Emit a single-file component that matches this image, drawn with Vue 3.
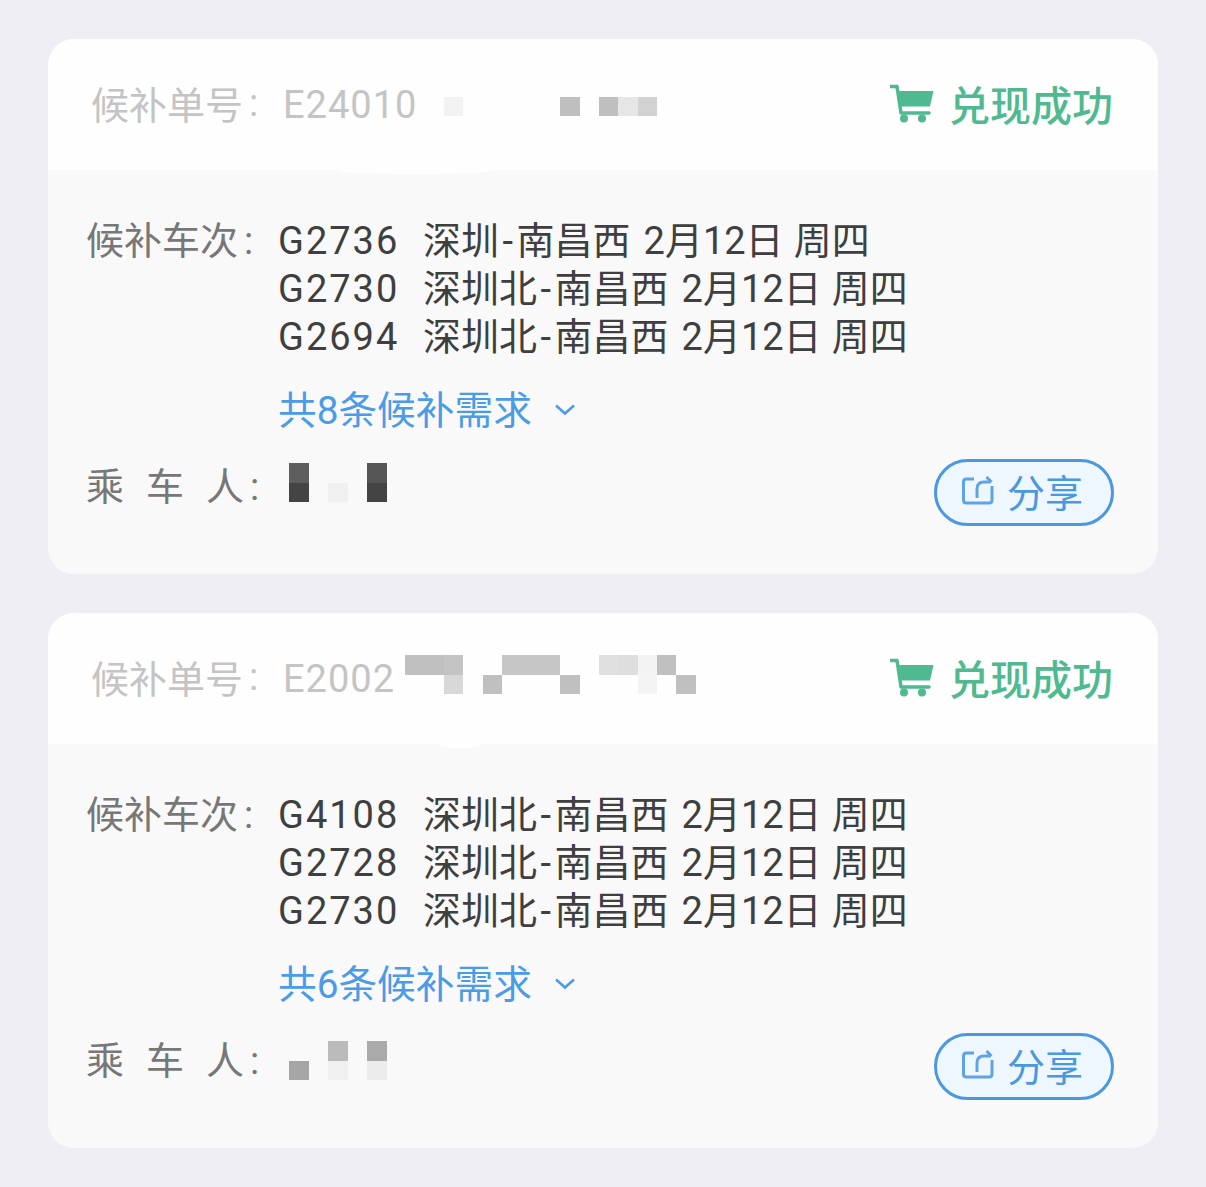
<script setup>
const orders = [
  {
    id: 'E24010',
    count: 8,
    shift: 0,
    smudge: { left: 290, width: 152 },
    trains: [
      { code: 'G2736', from: '深圳', to: '南昌西' },
      { code: 'G2730', from: '深圳北', to: '南昌西' },
      { code: 'G2694', from: '深圳北', to: '南昌西' }
    ],
    idCells: [
      [null, null, null, null, null, null, null, null, null, null, null, null, null, null, null],
      [null, null, '#f3f3f3', null, null, null, null, null, '#bfbfbf', null, '#bfbfbf', '#e6e6e6', '#d2d2d2', null, null]
    ],
    nameCells: [
      ['#5e5e5e', null, null, null, '#555555'],
      ['#444444', null, '#f0f0f0', null, '#444444']
    ]
  },
  {
    id: 'E2002',
    count: 6,
    shift: 4,
    smudge: { left: 392, width: 40 },
    trains: [
      { code: 'G4108', from: '深圳北', to: '南昌西' },
      { code: 'G2728', from: '深圳北', to: '南昌西' },
      { code: 'G2730', from: '深圳北', to: '南昌西' }
    ],
    idCells: [
      ['#c0c0c0', '#c0c0c0', '#c4c4c4', null, null, '#c6c6c6', '#c6c6c6', '#c6c6c6', null, null, '#e0e0e0', '#dedede', '#f3f3f3', '#c0c0c0', null],
      [null, null, '#d8d8d8', null, '#c0c0c0', null, null, null, '#c0c0c0', null, null, null, '#f4f4f4', null, '#c0c0c0']
    ],
    nameCells: [
      [null, null, '#bbbbbb', null, '#aaaaaa'],
      ['#a6a6a6', null, '#f0f0f0', null, '#ececec']
    ]
  }
]
</script>

<template>
  <div class="page">
    <div v-for="order in orders" :key="order.id" class="card">
      <div class="head">
        <div class="order">
          <span class="order-label">候补单号</span>
          <span class="colon">:</span>
          <span class="order-id">{{ order.id }}</span>
        </div>
        <div class="id-mosaic" :style="{ marginTop: order.shift + 'px' }">
          <template v-for="(row, r) in order.idCells">
            <i v-for="(c, i) in row" :key="r + '-' + i" :style="{ background: c || 'transparent' }"></i>
          </template>
        </div>
        <div class="status">
          <svg class="cart" width="44" height="40" viewBox="0 0 44 40">
            <path d="M1 2.500H7L11 29H39" fill="none" stroke="#4fb98f" stroke-width="3.500" stroke-linejoin="round" stroke-linecap="round" />
            <path d="M9 7H43.500L40 22.500H11Z" fill="#4fb98f" />
            <circle cx="14" cy="34.500" r="4" fill="#4fb98f" />
            <circle cx="32" cy="34.500" r="4" fill="#4fb98f" />
          </svg>
          <span class="status-text">兑现成功</span>
        </div>
        <div class="smudge" :style="{ left: order.smudge.left + 'px', width: order.smudge.width + 'px' }"></div>
      </div>

      <div class="body">
        <div class="trains-row">
          <div class="label">候补车次<span class="colon">:</span></div>
          <div class="trains">
            <div v-for="t in order.trains" :key="t.code" class="train">
              <span class="code">{{ t.code }}</span>
              <span>{{ t.from }}<span class="dash">-</span>{{ t.to }}</span>
              <span class="date">2月12日</span>
              <span class="week">周四</span>
            </div>
            <div class="more">
              <span>共{{ order.count }}条候补需求</span>
              <svg width="22" height="13" viewBox="0 0 22 13">
                <path d="M2 2.500L11 10.500L20 2.500" fill="none" stroke="#4a9be8" stroke-width="2.500" />
              </svg>
            </div>
          </div>
        </div>

        <div class="passenger-row">
          <div class="label passenger-label">
            <span class="wide"><span>乘</span><span>车</span><span>人</span></span>
            <span class="colon">:</span>
          </div>
          <div class="name-mosaic" :style="{ marginTop: 4 + order.shift + 'px' }">
            <template v-for="(row, r) in order.nameCells">
              <i v-for="(c, i) in row" :key="r + '-' + i" :style="{ background: c || 'transparent' }"></i>
            </template>
          </div>
          <button class="share">
            <svg width="34" height="32" viewBox="0 0 34 32">
              <path d="M13 5H5.500Q2.500 5 2.500 8V26Q2.500 29 5.500 29H28Q31 29 31 26V12" fill="none" stroke="#5fa3e6" stroke-width="3" />
              <path d="M16 24V15Q16 8 23 8H30M25.500 3L30.500 8" fill="none" stroke="#5fa3e6" stroke-width="3" />
            </svg>
            <span>分享</span>
          </button>
        </div>
      </div>
    </div>
  </div>
</template>

<style scoped>
.page {
  box-sizing: border-box;
  height: 1187px;
  overflow: hidden;
  padding: 39px 48px 0;
  background: #eeeef4;
  font-family: Roboto, "Noto Sans CJK SC", sans-serif;
  font-size: 38px;
}

.card {
  height: 535px;
  margin-bottom: 39px;
  border-radius: 26px;
  overflow: hidden;
  background: #f9f9f9;
}

.head {
  position: relative;
  height: 131px;
  display: flex;
  align-items: center;
  justify-content: space-between;
  padding: 0 45px 0 43px;
  background: #fefefe;
}

.order {
  display: flex;
  align-items: center;
  color: #c4c4c4;
}

.order-label {
  margin-bottom: 4px;
}

.order-id {
  white-space: nowrap;
  letter-spacing: 1px;
}

.colon {
  display: inline-block;
  width: 39px;
  padding-left: 6px;
  box-sizing: border-box;
}

.order .colon {
  width: 40px;
  margin-bottom: 4px;
}

.id-mosaic {
  position: absolute;
  left: 357px;
  top: 38px;
  display: grid;
  grid-template-columns: repeat(15, 19.4px);
  grid-auto-rows: 19.5px;
}

.smudge {
  position: absolute;
  top: 129px;
  height: 6px;
  border-radius: 50%;
  background: #fefefe;
}

.status {
  display: flex;
  align-items: center;
  gap: 15px;
  color: #4fb98f;
}

.status-text {
  font-size: 41px;
  font-weight: 500;
  margin-bottom: 4px;
}

.cart {
  margin-bottom: 2px;
}

.body {
  padding: 47px 44px 0 38px;
}

.trains-row {
  display: flex;
}

.label {
  width: 192px;
  flex-shrink: 0;
  height: 48px;
  line-height: 48px;
  color: #777;
  white-space: nowrap;
}

.trains {
  color: #3f3f3f;
}

.train {
  display: flex;
  height: 48px;
  line-height: 48px;
  white-space: nowrap;
}

.code {
  width: 145px;
  letter-spacing: 2px;
}

.dash {
  margin: 0 3.5px;
}

.date {
  margin-left: 13px;
}

.week {
  margin-left: 10px;
}

.more {
  display: flex;
  align-items: center;
  gap: 22px;
  height: 48px;
  margin-top: 22px;
  color: #4a9be8;
  font-size: 38.7px;
}

.more svg {
  margin-top: 4px;
}

.passenger-row {
  display: flex;
  align-items: flex-start;
  margin-top: 28px;
}

.passenger-label {
  display: flex;
  margin-top: 4px;
}

.wide {
  display: flex;
  gap: 22px;
}

.name-mosaic {
  margin-left: 11px;
  display: grid;
  grid-template-columns: repeat(5, 19.6px);
  grid-auto-rows: 19.5px;
}

.share {
  margin-left: auto;
  width: 180px;
  height: 67px;
  display: flex;
  align-items: center;
  justify-content: center;
  gap: 12px;
  padding: 0 4px 5px 0;
  border: 3px solid #4a98e0;
  border-radius: 34px;
  background: #eef6fe;
  color: #4a98e0;
  font: inherit;
}
</style>

<style>
body {
  background: #eeeef4;
}
</style>
